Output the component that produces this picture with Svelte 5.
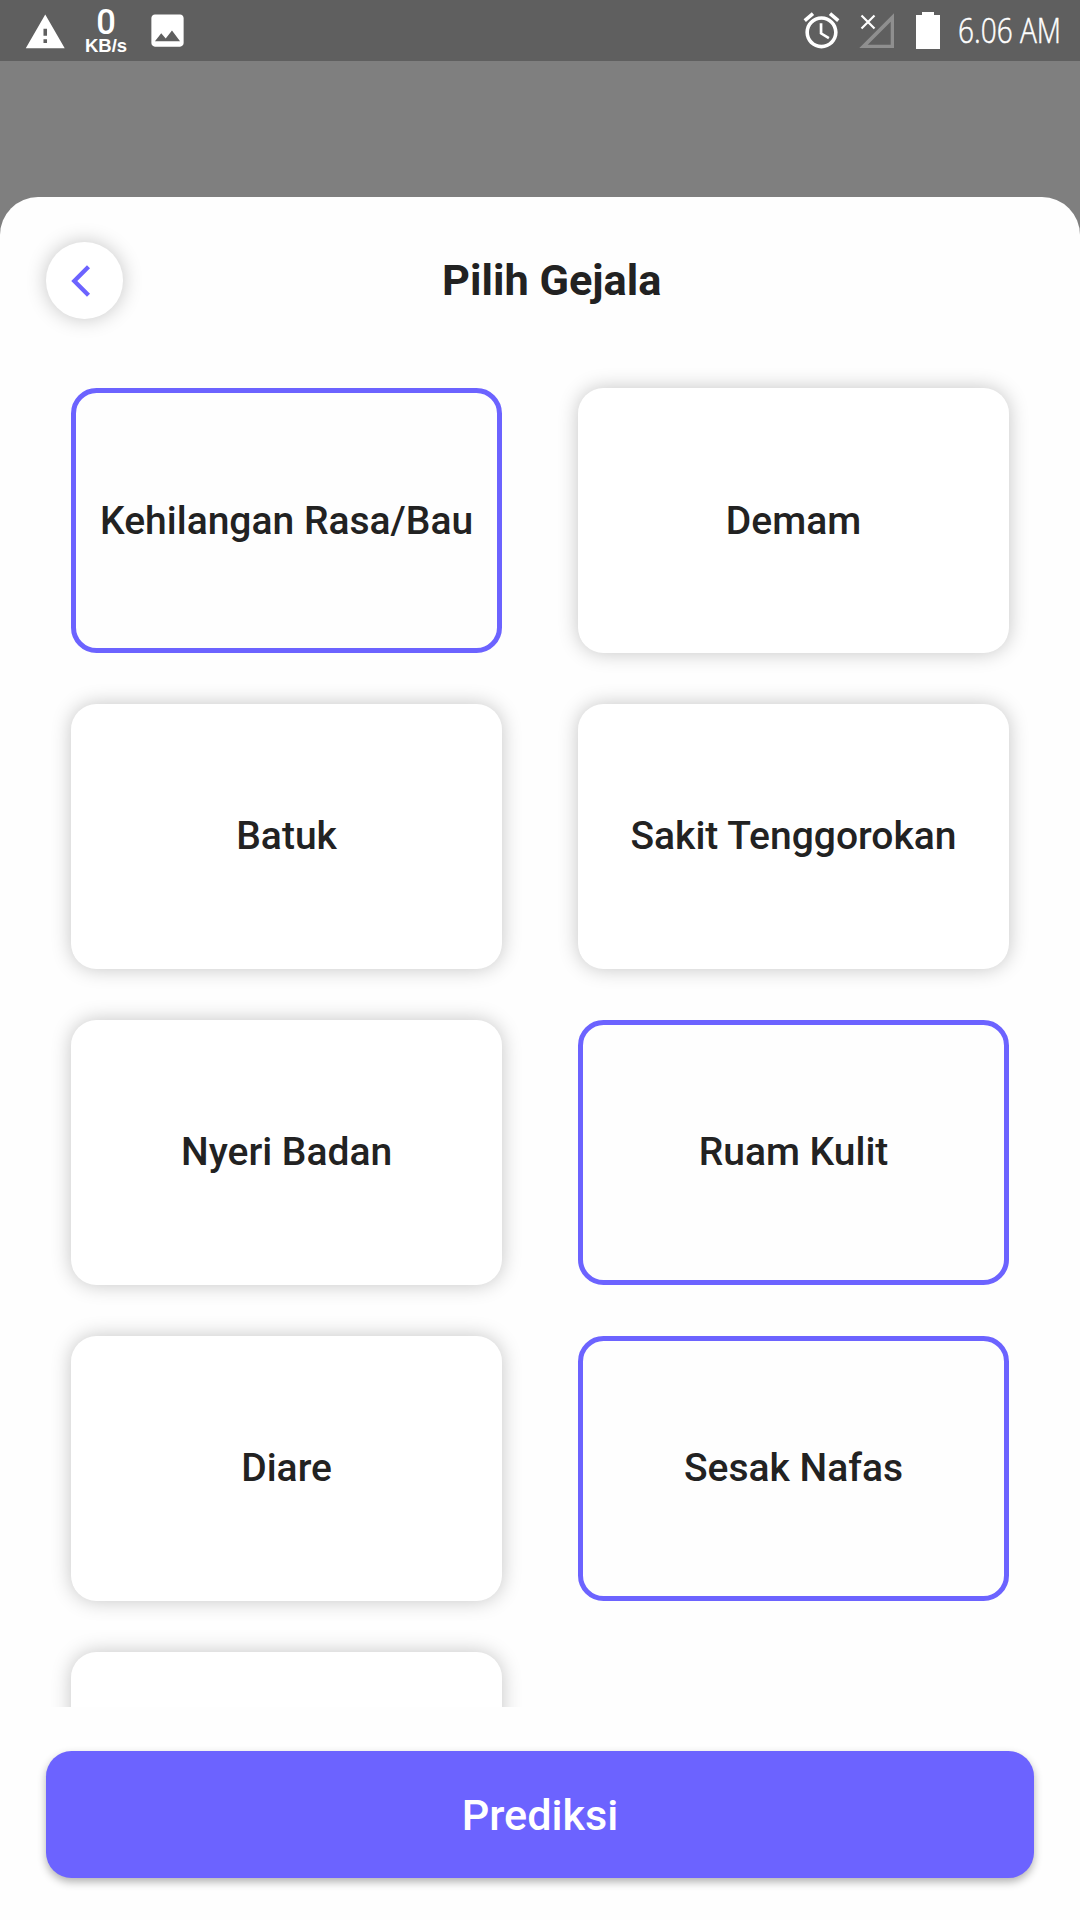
<script>
  const symptoms = $state([
    { name: 'Kehilangan Rasa/Bau', selected: true },
    { name: 'Demam', selected: false },
    { name: 'Batuk', selected: false },
    { name: 'Sakit Tenggorokan', selected: false },
    { name: 'Nyeri Badan', selected: false },
    { name: 'Ruam Kulit', selected: true },
    { name: 'Diare', selected: false },
    { name: 'Sesak Nafas', selected: true },
    { name: '', selected: false }
  ]);
</script>

<div class="screen">
  <div class="status">
    <svg class="warn" viewBox="0 0 24 24"><path d="M1 21h22L12 2 1 21zm12-3h-2v-2h2v2zm0-4h-2v-4h2v4z" /></svg>
    <div class="speed">
      <span class="rate">0</span>
      <span class="unit">KB/s</span>
    </div>
    <svg class="photo" viewBox="0 0 24 24"><path d="M21 19V5c0-1.1-.9-2-2-2H5c-1.1 0-2 .9-2 2v14c0 1.1.9 2 2 2h14c1.1 0 2-.9 2-2zM8.5 13.5l2.5 3.01L14.5 12l4.5 6H5l3.5-4.5z" /></svg>
    <div class="spacer"></div>
    <svg class="alarm" viewBox="0 0 24 24"><path d="M22 5.72l-4.6-3.86-1.29 1.53 4.6 3.86L22 5.72zM7.88 3.39L6.6 1.86 2 5.71l1.29 1.53 4.59-3.85zM12.5 8H11v6l4.75 2.85.75-1.23-4-2.37V8zM12 4c-4.97 0-9 4.03-9 9s4.02 9 9 9c4.97 0 9-4.03 9-9s-4.03-9-9-9zm0 16c-3.87 0-7-3.13-7-7s3.13-7 7-7 7 3.13 7 7-3.13 7-7 7z" /></svg>
    <svg class="signal" viewBox="0 0 36 36">
      <path class="bars" d="M35 .3V35H.3zM31.7 8.7L8.7 31.7h23z" />
      <path class="cross" d="M2.5 2.5l13 13M15.5 2.5l-13 13" />
    </svg>
    <svg class="battery" viewBox="0 0 24 37"><path d="M6 0h12v3h6v34H0V3h6z" /></svg>
    <svg class="clock" viewBox="0 0 112 60"><text x="0" y="43" textLength="103" lengthAdjust="spacingAndGlyphs">6.06 AM</text></svg>
  </div>

  <main class="sheet">
    <header>
      <button class="back" aria-label="Kembali">
        <svg viewBox="0 0 20 32"><path d="M17.5 1.8L3.3 16l14.2 14.2" /></svg>
      </button>
      <h1>Pilih Gejala</h1>
    </header>

    <div class="list">
      {#each symptoms as item}
        <button class="card" class:selected={item.selected} onclick={() => (item.selected = !item.selected)}>{item.name}</button>
      {/each}
    </div>

    <button class="predict">Prediksi</button>
  </main>
</div>

<style>
  :global(body) {
    margin: 0;
    background: #7f7f7f;
  }
  button {
    border: 0;
    padding: 0;
    font: inherit;
    color: inherit;
  }
  .screen {
    width: 1080px;
    height: 1920px;
    display: flex;
    flex-direction: column;
    background: #7f7f7f;
    font-family: Roboto, sans-serif;
    color: #222;
    overflow: hidden;
  }
  .status {
    height: 61px;
    flex: none;
    display: flex;
    align-items: flex-start;
    background: #5f5f5f;
    fill: #fff;
    color: #fff;
  }
  .status svg {
    flex: none;
    display: block;
    overflow: visible;
  }
  .warn {
    width: 42.5px;
    height: 42.5px;
    margin: 11px 0 0 24px;
  }
  .speed {
    width: 46px;
    margin: 5px 0 0 16.5px;
    display: flex;
    flex-direction: column;
    align-items: center;
  }
  .rate {
    font-size: 34.5px;
    line-height: 34px;
    font-weight: 500;
  }
  .unit {
    font: bold 18.5px/18px 'Liberation Sans', sans-serif;
    margin-top: -2px;
  }
  .photo {
    width: 43px;
    height: 43px;
    margin: 9px 0 0 17px;
  }
  .spacer {
    flex: 1;
  }
  .alarm {
    width: 43px;
    height: 43px;
    margin: 9px 16px 0 0;
  }
  .signal {
    width: 36px;
    height: 36px;
    margin: 13px 21px 0 0;
  }
  .bars {
    fill: #8f8f8f;
  }
  .cross {
    fill: none;
    stroke: #fff;
    stroke-width: 2.2;
  }
  .battery {
    width: 24px;
    height: 37px;
    margin: 12px 18px 0 0;
  }
  .clock {
    width: 112px;
    height: 60px;
    margin: 0 10px 0 0;
  }
  .clock text {
    font: 300 35px 'Open Sans', sans-serif;
    stroke: #fff;
    stroke-width: 0.5;
  }
  .sheet {
    margin-top: 135.5px;
    flex: 1;
    min-height: 0;
    box-sizing: border-box;
    padding: 45.8px 46px 41.6px;
    display: flex;
    flex-direction: column;
    background: #fefefe;
    border-radius: 38px 38px 0 0;
  }
  header {
    flex: none;
    display: grid;
    grid-template-columns: 76.5px 1fr 51px;
    align-items: center;
  }
  .back {
    width: 76.5px;
    height: 76.5px;
    border-radius: 50%;
    background: #fff;
    box-shadow: 0 0 20px rgba(0, 0, 0, 0.23);
    display: flex;
    align-items: center;
    justify-content: center;
  }
  .back svg {
    width: 20px;
    height: 32px;
    margin-right: 6px;
    fill: none;
    stroke: #6c63ff;
    stroke-width: 4.3;
  }
  h1 {
    margin: 0;
    padding: 1.2px 2px 0 0;
    text-align: center;
    font-size: 43.3px;
    line-height: 50px;
    font-weight: 700;
  }
  .list {
    flex: 1;
    min-height: 0;
    overflow: hidden;
    margin: 0 -46px 43.5px;
    padding: 69.3px 71.3px 0 71.4px;
    display: grid;
    grid-template-columns: 1fr 1fr;
    grid-auto-rows: 264.9px;
    gap: 51px 76.5px;
  }
  .card {
    box-sizing: border-box;
    border-radius: 25.5px;
    background: #fff;
    box-shadow: 0 0 20px rgba(0, 0, 0, 0.23);
    font-size: 39px;
    font-weight: 500;
    white-space: nowrap;
  }
  .selected {
    border: 5px solid #6c63ff;
    background: #fefefe;
    box-shadow: none;
  }
  .predict {
    flex: none;
    height: 127.5px;
    padding-top: 1px;
    border-radius: 25.5px;
    background: #6c63ff;
    color: #fff;
    font-size: 43.2px;
    font-weight: 500;
    box-shadow: 0 4px 8px rgba(0, 0, 0, 0.3);
  }
</style>
